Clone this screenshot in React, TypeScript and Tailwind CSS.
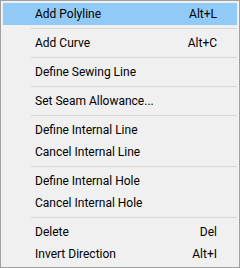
type Item = { label: string; shortcut?: string; active?: boolean };

const groups: Item[][] = [
  [{ label: "Add Polyline", shortcut: "Alt+L", active: true }],
  [{ label: "Add Curve", shortcut: "Alt+C" }],
  [{ label: "Define Sewing Line" }],
  [{ label: "Set Seam Allowance..." }],
  [{ label: "Define Internal Line" }, { label: "Cancel Internal Line" }],
  [{ label: "Define Internal Hole" }, { label: "Cancel Internal Hole" }],
  [{ label: "Delete", shortcut: "Del" }, { label: "Invert Direction", shortcut: "Alt+I" }],
];

function MenuRow({ item }: { item: Item }) {
  return (
    <div
      className={`flex h-[22px] items-center pl-[32px] pr-[20px] ${
        item.active ? "bg-[#91c9f7]" : ""
      }`}
    >
      <span className="flex-1">{item.label}</span>
      {item.shortcut && <span>{item.shortcut}</span>}
    </div>
  );
}

export default function App() {
  return (
    <div
      className="w-[240px] h-[268px] border border-[#a0a0a0] bg-[#f0f0f0] p-[2px] text-[12px] text-black"
      style={{ fontFamily: 'Roboto, "Noto Sans CJK KR", sans-serif' }}
    >
      {groups.map((group, gi) => (
        <div key={gi}>
          {gi > 0 && (
            <div className="h-[7px] pt-[3px] pl-[28px]">
              <div className="h-px bg-[#d7d7d7]" />
            </div>
          )}
          {group.map((item) => (
            <MenuRow key={item.label} item={item} />
          ))}
        </div>
      ))}
    </div>
  );
}
